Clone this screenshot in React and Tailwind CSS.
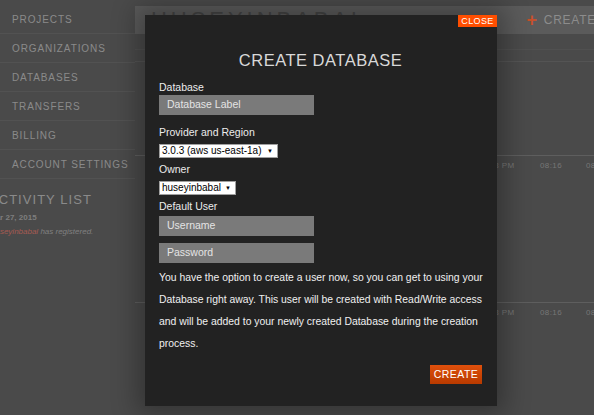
import React from 'react';

const navItems = [
	'Projects',
	'Organizations',
	'Databases',
	'Transfers',
	'Billing',
	'Account Settings',
];

const Sidebar = () => (
	<aside className="w-[135px] shrink-0 pt-[5px]">
		{ navItems.map( ( item ) => (
			<div
				key={ item }
				className="h-[29px] border-b border-[#525252] flex items-center pl-[12px] text-[10px] uppercase tracking-[0.09em] text-[#8a8a8a]"
			>
				{ item }
			</div>
		) ) }
		<div className="mt-[13px] ml-[-11px] text-[13px] uppercase tracking-[0.08em] text-[#8a8a8a] leading-[16px] whitespace-nowrap">
			Activity List
		</div>
		<div className="mt-[4px] ml-[-11px] text-[8px] font-bold text-[#7e7e7e] leading-[11px] whitespace-nowrap">
			Mar 27, 2015
		</div>
		<div className="mt-[3px] ml-[-9px] text-[8px] italic text-[#808080] leading-[11px] whitespace-nowrap">
			<span className="text-[#a65a52]">huseyinbabal</span> has registered.
		</div>
	</aside>
);

const AxisLabels = () => (
	<div className="relative h-[18px] text-[8px] text-[#767676] tracking-[0.05em]">
		<span className="absolute left-[342px] top-[4px]">08:08 PM</span>
		<span className="absolute left-[405px] top-[4px]">08:16</span>
		<span className="absolute left-[451px] top-[4px]">08:24</span>
	</div>
);

const Main = () => (
	<main className="flex-1 flex flex-col">
		<div className="mt-[6px] h-[28px] bg-[#5b5b5b] flex items-start justify-between pl-[16px] overflow-hidden">
			<span className="text-[22px] tracking-[0.18em] text-[#444444] leading-[22px] mt-[3px]">
				HUSEYINBABAL
			</span>
			<span className="flex items-center gap-[6px] mt-[5px] text-[12px] text-[#8c8c8c] tracking-[0.06em] whitespace-nowrap ml-auto mr-[-74px]">
				<span className="text-[#c4502c] text-[18px] font-bold leading-[18px]">+</span>
				CREATE DATABASE
			</span>
		</div>
		<div className="h-[16px] border-b border-[#505050]" />
		<div className="h-[12px] border-b border-[#545454]" />
		<div className="h-[94px] border-b border-[#5e5e5e]" />
		<AxisLabels />
		<div className="h-[129px] border-b border-[#5e5e5e]" />
		<AxisLabels />
	</main>
);

const FieldLabel = ( { children, className } ) => (
	<div className={ `h-[14px] leading-[14px] text-[10.5px] text-[#ececec] ${ className }` }>
		{ children }
	</div>
);

const TextInput = ( { placeholder, className } ) => (
	<div
		className={ `w-[155px] h-[20px] bg-[#7a7a7a] flex items-center pl-[8px] text-[10.5px] text-[#e4e4e4] ${ className }` }
	>
		{ placeholder }
	</div>
);

const SelectBox = ( { value, width, className } ) => (
	<div
		className={ `${ width } h-[14px] bg-white border border-[#a0a0a0] flex items-center justify-between pl-[2px] pr-[4px] text-[10px] text-black leading-[12px] ${ className }` }
	>
		<span>{ value }</span>
		<span className="text-[6px]">▼</span>
	</div>
);

const CreateDatabaseModal = () => (
	<div className="absolute left-[145px] top-[15px] w-[352px] h-[391px] bg-[#222222] shadow-[0_0_24px_8px_rgba(0,0,0,0.3)] flex flex-col pl-[14px] pr-[15px]">
		<button className="absolute top-0 right-0 w-[39px] h-[12px] bg-[#ff4e00] text-white text-[9px] leading-[12px] tracking-[0.04em]">
			CLOSE
		</button>
		<h2 className="mt-[34px] h-[22px] leading-[22px] text-center text-[16.5px] tracking-[0.03em] text-[#d9d9d9]">
			CREATE DATABASE
		</h2>
		<FieldLabel className="mt-[9px]">Database</FieldLabel>
		<TextInput placeholder="Database Label" className="mt-[1px]" />
		<FieldLabel className="mt-[10px]">Provider and Region</FieldLabel>
		<SelectBox value="3.0.3 (aws us-east-1a)" width="w-[119px]" className="mt-[5px]" />
		<FieldLabel className="mt-[4px]">Owner</FieldLabel>
		<SelectBox value="huseyinbabal" width="w-[77px]" className="mt-[5px]" />
		<FieldLabel className="mt-[4px]">Default User</FieldLabel>
		<TextInput placeholder="Username" className="mt-[3px]" />
		<TextInput placeholder="Password" className="mt-[7px]" />
		<p className="mt-[4px] text-[10.4px] leading-[22px] text-[#f0f0f0] whitespace-nowrap">
			You have the option to create a user now, so you can get to using your
			<br />
			Database right away. This user will be created with Read/Write access
			<br />
			and will be added to your newly created Database during the creation
			<br />
			process.
		</p>
		<button className="mt-[10px] self-end w-[52px] h-[19px] bg-gradient-to-b from-[#e0500c] to-[#b83a00] text-white text-[10.5px] tracking-[0.04em] leading-[19px]">
			CREATE
		</button>
	</div>
);

export default function App() {
	return (
		<div
			className="relative w-[594px] h-[415px] overflow-hidden bg-[#4a4a4a] flex"
			style={ { fontFamily: '"Liberation Sans", Arial, sans-serif' } }
		>
			<Sidebar />
			<Main />
			<CreateDatabaseModal />
		</div>
	);
}
